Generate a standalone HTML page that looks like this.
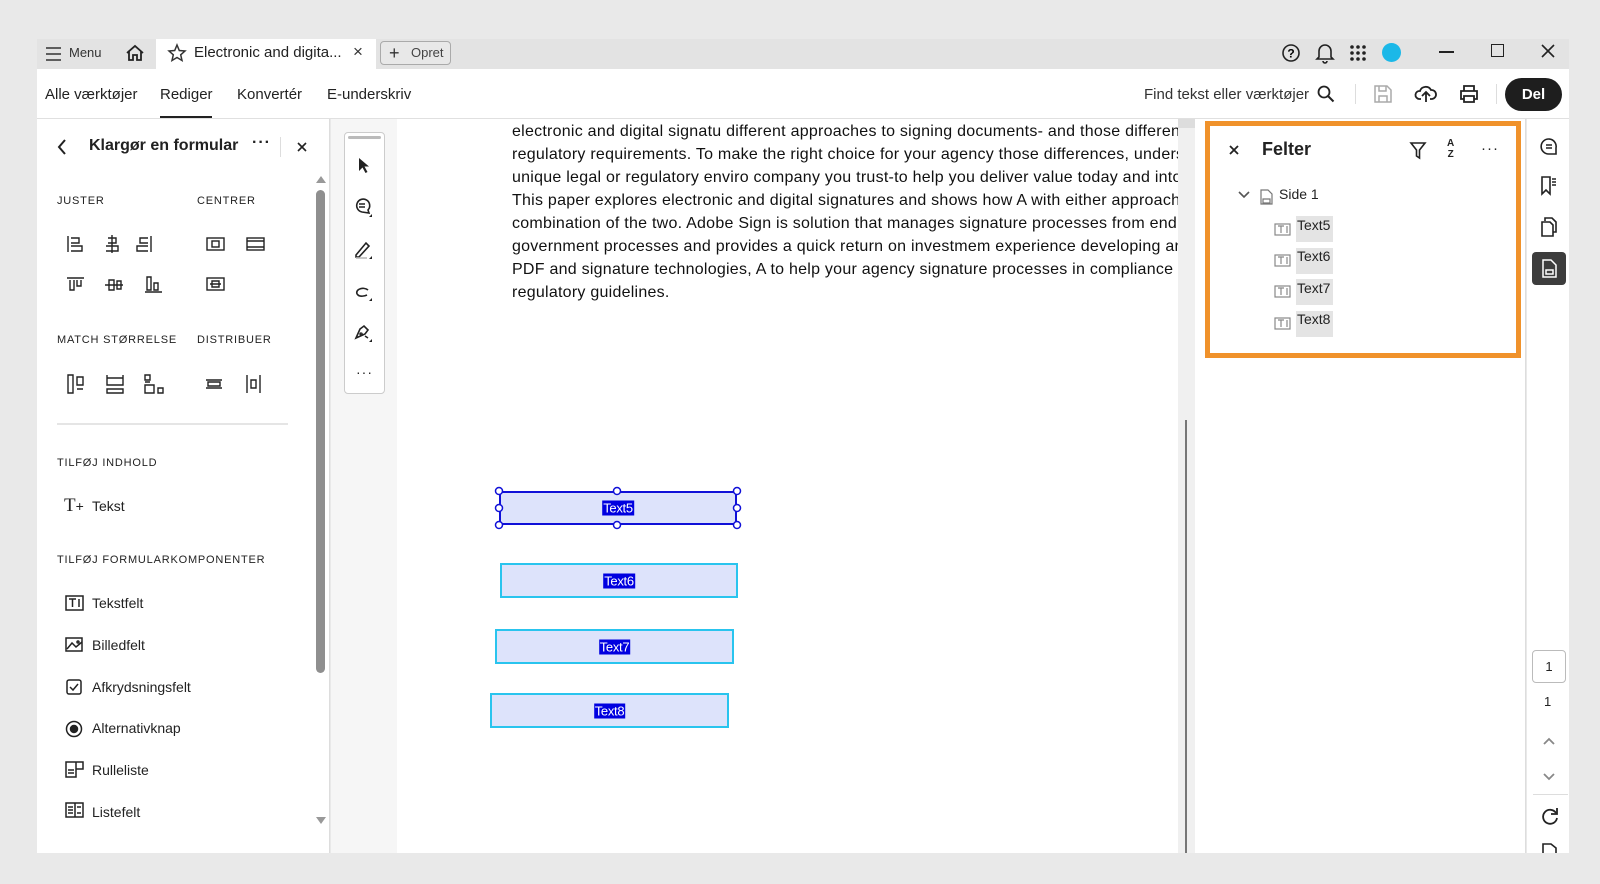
<!DOCTYPE html>
<html><head><meta charset="utf-8"><style>
*{margin:0;padding:0;box-sizing:border-box}
body{width:1600px;height:884px;background:#e9e9e9;font-family:"Liberation Sans",sans-serif;color:#222;position:relative;overflow:hidden}
.a{position:absolute}
.lbl{font-size:11px;letter-spacing:.8px;color:#222}
.item{font-size:14px;color:#222}
svg{position:absolute;overflow:visible}
.doc{font-size:16px;line-height:23px;color:#111;white-space:nowrap;letter-spacing:.25px}
.fld{position:absolute;background:#dde3fb;border:2px solid #29c4ee}
.fld span{position:absolute;left:50%;top:50%;transform:translate(-50%,-50%);background:#0000e0;color:#fff;font-size:13px;padding:0 1px;letter-spacing:-.3px}
.tr{font-size:14px;color:#222}
</style></head><body>
<div class="a" style="left:37px;top:39px;width:1532px;height:30px;background:#e3e3e3"></div>
<div class="a" style="left:156px;top:39px;width:220px;height:30px;background:#fff"></div>
<svg style="left:46px;top:47px" width="16" height="14"><path d="M0 1H15M0 7H15M0 13H15" stroke="#333" stroke-width="1.6"/></svg>
<div class="a" style="left:69px;top:45px;font-size:13px;color:#333">Menu</div>
<svg style="left:125px;top:44px" width="20" height="18"><path d="M2 9L10 2L18 9M4 7V16H8V11H12V16H16V7" fill="none" stroke="#222" stroke-width="1.8"/></svg>
<svg style="left:168px;top:44px" width="18" height="18"><path d="M9 1L11.3 6.5L17 7L12.7 10.8L14 16.5L9 13.5L4 16.5L5.3 10.8L1 7L6.7 6.5Z" fill="none" stroke="#333" stroke-width="1.5"/></svg>
<div class="a" style="left:194px;top:44px;font-size:15px;color:#222">Electronic and digita...</div>
<div class="a" style="left:353px;top:42px;font-size:17px;color:#333">×</div>
<div class="a" style="left:380px;top:41px;width:71px;height:24px;border:1.5px solid #aaa;border-radius:4px;background:#e8e8e8"></div>
<div class="a" style="left:389px;top:43px;font-size:18px;color:#333">+</div>
<div class="a" style="left:411px;top:45px;font-size:13px;color:#444">Opret</div>
<svg style="left:1281px;top:43px" width="20" height="20"><circle cx="10" cy="10" r="8" fill="none" stroke="#222" stroke-width="1.6"/><text x="10" y="14.5" font-size="12" font-weight="bold" text-anchor="middle" font-family="Liberation Sans">?</text></svg>
<svg style="left:1315px;top:42px" width="20" height="22"><path d="M4 15V9A6 6 0 0 1 16 9V15L18 17H2Z M8 19A2 2 0 0 0 12 19" fill="none" stroke="#222" stroke-width="1.6"/></svg>
<svg style="left:1350px;top:45px" width="16" height="16"><g fill="#222"><circle cx="2" cy="2" r="1.8"/><circle cx="8" cy="2" r="1.8"/><circle cx="14" cy="2" r="1.8"/><circle cx="2" cy="8" r="1.8"/><circle cx="8" cy="8" r="1.8"/><circle cx="14" cy="8" r="1.8"/><circle cx="2" cy="14" r="1.8"/><circle cx="8" cy="14" r="1.8"/><circle cx="14" cy="14" r="1.8"/></g></svg>
<div class="a" style="left:1382px;top:43px;width:19px;height:19px;border-radius:50%;background:#1bb8e8"></div>
<div class="a" style="left:1439px;top:51px;width:15px;height:2px;background:#222"></div>
<div class="a" style="left:1491px;top:44px;width:13px;height:13px;border:1.5px solid #222"></div>
<svg style="left:1541px;top:44px" width="14" height="14"><path d="M1 1L13 13M13 1L1 13" stroke="#222" stroke-width="1.6"/></svg>
<div class="a" style="left:37px;top:69px;width:1532px;height:50px;background:#fff;border-bottom:1px solid #e0e0e0"></div>
<div class="a" style="left:45px;top:86px;font-size:15px">Alle værktøjer</div>
<div class="a" style="left:160px;top:86px;font-size:15px">Rediger</div>
<div class="a" style="left:160px;top:116px;width:52px;height:2px;background:#222"></div>
<div class="a" style="left:237px;top:86px;font-size:15px">Konvertér</div>
<div class="a" style="left:327px;top:86px;font-size:15px">E-underskriv</div>
<div class="a" style="left:1144px;top:86px;font-size:15px;color:#333">Find tekst eller værktøjer</div>
<svg style="left:1317px;top:85px" width="18" height="18"><circle cx="7" cy="7" r="5.5" fill="none" stroke="#222" stroke-width="1.8"/><path d="M11 11L16.5 16.5" stroke="#222" stroke-width="2"/></svg>
<div class="a" style="left:1355px;top:84px;width:1px;height:20px;background:#ddd"></div>
<svg style="left:1374px;top:85px" width="18" height="18"><path d="M1 1H13L17 5V17H1Z M5 1V6H12V1 M5 17V11H13V17" fill="none" stroke="#aaa" stroke-width="1.5"/></svg>
<svg style="left:1415px;top:84px" width="22" height="20"><path d="M6 15H4A4 4 0 0 1 5 7A6 6 0 0 1 16 6A4.5 4.5 0 0 1 17 15H15 M11 18V9M7 12L11 8L15 12" fill="none" stroke="#222" stroke-width="1.8"/></svg>
<svg style="left:1459px;top:85px" width="20" height="18"><path d="M5 6V1H15V6 M5 14H2V6H18V14H15 M5 11H15V17H5Z" fill="none" stroke="#222" stroke-width="1.8"/></svg>
<div class="a" style="left:1496px;top:84px;width:1px;height:20px;background:#ddd"></div>
<div class="a" style="left:1505px;top:78px;width:57px;height:33px;border-radius:17px;background:#1e1e1e;color:#fff;font-weight:bold;font-size:15px;text-align:center;line-height:33px">Del</div>
<div class="a" style="left:37px;top:119px;width:293px;height:734px;background:#fff;border-right:1px solid #ddd"></div>
<svg style="left:57px;top:139px" width="10" height="16"><path d="M8 1L2 8L8 15" fill="none" stroke="#222" stroke-width="2"/></svg>
<div class="a" style="left:89px;top:137px;font-size:16px;font-weight:bold;color:#222">Klargør en formular</div>
<div class="a" style="left:252px;top:134px;font-size:16px;font-weight:bold;letter-spacing:1px">···</div>
<div class="a" style="left:280px;top:137px;width:1px;height:20px;background:#ddd"></div>
<svg style="left:297px;top:142px" width="10" height="10"><path d="M1 1L9 9M9 1L1 9" stroke="#222" stroke-width="1.6"/></svg>
<div class="a lbl" style="left:57px;top:195px">JUSTER</div>
<div class="a lbl" style="left:197px;top:195px">CENTRER</div>
<svg style="left:67px;top:235px" width="200" height="60" fill="none" stroke="#222" stroke-width="1.4">
<path d="M1 1V17M4 3H12V8H4M4 11H15V16H4"/>
<path d="M45 0V18M41 3H49V8H41M39 11H51V16H39"/>
<path d="M84 1V17M81 3H73V8H81M81 11H70V16H81"/>
<rect x="140" y="3" width="17" height="12"/><rect x="145" y="6" width="7" height="6"/>
<rect x="180" y="3" width="17" height="12"/><path d="M180 6H197M180 12H197"/>
<path d="M0 43H17M3 45V55H7V45M10 45V51H14V45"/>
<path d="M38 50H56M42 45H47V55H42ZM50 46H54V54H50Z"/>
<path d="M78 57H95M80 42V55H84V42ZM87 48V55H91V48Z"/>
<rect x="140" y="43" width="17" height="12"/><path d="M143 49H154M145 46H152V52H145Z"/>
</svg>
<div class="a lbl" style="left:57px;top:334px">MATCH STØRRELSE</div>
<div class="a lbl" style="left:197px;top:334px">DISTRIBUER</div>
<svg style="left:67px;top:374px" width="200" height="22" fill="none" stroke="#222" stroke-width="1.4">
<path d="M1 1H6V19H1ZM10 3H16V11H10ZM10 15H16"/>
<path d="M40 4H56V11H40ZM40 15H56V19H40ZM40 1V6M56 1V6"/>
<path d="M78 1H83V6H78ZM78 11H87V19H78ZM91 14H96V19H91ZM78 8H83"/>
<path d="M139 6H155M139 14H155M141 8H153V12H141Z"/>
<path d="M180 1V19M193 1V19M184 6H189V14H184Z"/>
</svg>
<div class="a" style="left:57px;top:423px;width:231px;height:2px;background:#e5e5e5"></div>
<div class="a lbl" style="left:57px;top:457px">TILFØJ INDHOLD</div>
<div class="a" style="left:64px;top:495px;font-size:19px;font-family:'Liberation Serif',serif">T<span style="font-size:14px;font-family:'Liberation Sans'">+</span></div>
<div class="a item" style="left:92px;top:498px">Tekst</div>
<div class="a lbl" style="left:57px;top:554px">TILFØJ FORMULARKOMPONENTER</div>
<svg style="left:65px;top:595px" width="20" height="240" fill="none" stroke="#222" stroke-width="1.5">
<rect x="1" y="1" width="17" height="14"/><path d="M4 4H11M7.5 4V12M14 4V12"/>
<rect x="1" y="43" width="16" height="13"/><path d="M2 54L7 48L11 52L17 47"/><circle cx="13" cy="47" r="1"/>
<rect x="2" y="85" width="14" height="14" rx="2"/><path d="M5 92L8 95L13 89"/>
<circle cx="9" cy="134" r="7.5"/><circle cx="9" cy="134" r="3.5" fill="#222"/>
<path d="M1 167H11V182H1ZM11 167H18V174H11M3 175H9M3 178H9"/>
<rect x="1" y="208" width="17" height="14"/><path d="M10 208V222M3 212H8M3 215H8M3 218H8M12 212H16M12 218H16"/>
</svg>
<div class="a item" style="left:92px;top:595px">Tekstfelt</div>
<div class="a item" style="left:92px;top:637px">Billedfelt</div>
<div class="a item" style="left:92px;top:679px">Afkrydsningsfelt</div>
<div class="a item" style="left:92px;top:720px">Alternativknap</div>
<div class="a item" style="left:92px;top:762px">Rulleliste</div>
<div class="a item" style="left:92px;top:804px">Listefelt</div>
<div class="a" style="left:316px;top:176px;width:0;height:0;border-left:5px solid transparent;border-right:5px solid transparent;border-bottom:7px solid #999"></div>
<div class="a" style="left:316px;top:190px;width:9px;height:483px;border-radius:5px;background:#8f8f8f"></div>
<div class="a" style="left:316px;top:817px;width:0;height:0;border-left:5px solid transparent;border-right:5px solid transparent;border-top:7px solid #999"></div>
<div class="a" style="left:331px;top:119px;width:66px;height:734px;background:#f6f6f6"></div>
<div class="a" style="left:344px;top:132px;width:41px;height:262px;border:1px solid #ccc;border-radius:4px;background:#fff"></div>
<div class="a" style="left:348px;top:136px;width:33px;height:3px;border-radius:2px;background:#bbb"></div>
<svg style="left:358px;top:157px" width="14" height="18"><path d="M1 1L1 14L4.5 10.5L7.5 16L9.5 15L6.5 9.5H11Z" fill="#222"/></svg>
<svg style="left:354px;top:198px" width="24" height="22" fill="none" stroke="#222" stroke-width="1.6"><path d="M8 14A6.5 6.5 0 1 1 14 12L15 15Z"/><path d="M5 6H11M5 9H11"/><path d="M18 16V19H15Z" fill="#222" stroke="none"/></svg>
<svg style="left:354px;top:240px" width="24" height="22" fill="none" stroke="#222" stroke-width="1.6"><path d="M2 15L12 3L15 6L5 17H2Z"/><path d="M2 18H13" stroke="#bbb"/><path d="M18 16V19H15Z" fill="#222" stroke="none"/></svg>
<svg style="left:354px;top:282px" width="24" height="22" fill="none" stroke="#222" stroke-width="1.6"><path d="M14 8A6 4 0 1 0 4 13C6 15 11 14 13 13"/><path d="M18 16V19H15Z" fill="#222" stroke="none"/></svg>
<svg style="left:354px;top:323px" width="24" height="22" fill="none" stroke="#222" stroke-width="1.6"><path d="M2 15L6 6L10 3L14 7L11 11L2 15ZM7 10A1 1 0 1 0 7.1 10"/><path d="M11 13L14 15"/><path d="M18 16V19H15Z" fill="#222" stroke="none"/></svg>
<div class="a" style="left:356px;top:364px;font-size:14px;letter-spacing:1px">···</div>
<div class="a" style="left:397px;top:119px;width:781px;height:734px;background:#fff"></div>
<div class="a doc" style="left:512px;top:120px;width:666px;overflow:hidden">electronic and digital signatu different approaches to signing documents- and those differences<br>regulatory requirements. To make the right choice for your agency those differences, understand<br>unique legal or regulatory enviro company you trust-to help you deliver value today and into the<br>This paper explores electronic and digital signatures and shows how A with either approach, or<br>combination of the two. Adobe Sign is solution that manages signature processes from end to end<br>government processes and provides a quick return on investmem experience developing and<br>PDF and signature technologies, A to help your agency signature processes in compliance with<br>regulatory guidelines.</div>
<div class="a" style="left:1178px;top:119px;width:17px;height:734px;background:#f0f0f0"></div>
<div class="a" style="left:1178px;top:119px;width:17px;height:9px;background:#ddd"></div>
<div class="a" style="left:1185px;top:420px;width:2px;height:433px;background:#777"></div>
<div class="a" style="left:1201px;top:510px;width:3px;height:45px;background:#aaa;border-radius:2px"></div>
<div class="fld" style="left:499px;top:491px;width:238px;height:34px;border-color:#1010d8"><span>Text5</span></div>
<svg style="left:499px;top:491px" width="240" height="36" fill="#fff" stroke="#1010d8" stroke-width="1.5"><circle cx="0" cy="0" r="3.5"/><circle cx="118" cy="0" r="3.5"/><circle cx="238" cy="0" r="3.5"/><circle cx="0" cy="17" r="3.5"/><circle cx="238" cy="17" r="3.5"/><circle cx="0" cy="34" r="3.5"/><circle cx="118" cy="34" r="3.5"/><circle cx="238" cy="34" r="3.5"/></svg>
<div class="fld" style="left:500px;top:563px;width:238px;height:35px"><span>Text6</span></div>
<div class="fld" style="left:495px;top:629px;width:239px;height:35px"><span>Text7</span></div>
<div class="fld" style="left:490px;top:693px;width:239px;height:35px"><span>Text8</span></div>
<div class="a" style="left:1195px;top:119px;width:331px;height:734px;background:#fff;border-right:1px solid #ddd"></div>
<div class="a" style="left:1205px;top:121px;width:316px;height:237px;border:5px solid #f0922b"></div>
<svg style="left:1229px;top:145px" width="10" height="10"><path d="M1 1L9 9M9 1L1 9" stroke="#222" stroke-width="1.8"/></svg>
<div class="a" style="left:1262px;top:139px;font-size:18px;font-weight:bold">Felter</div>
<svg style="left:1410px;top:142px" width="16" height="17"><path d="M1 1H15L9.5 8V16L6.5 14V8Z" fill="none" stroke="#222" stroke-width="1.6"/></svg>
<div class="a" style="left:1447px;top:138px;font-size:10px;font-weight:bold;line-height:11px;text-align:center">A<br>Z</div>
<div class="a" style="left:1481px;top:140px;font-size:15px;letter-spacing:1px">···</div>
<svg style="left:1238px;top:191px" width="12" height="8"><path d="M1 1L6 6L11 1" fill="none" stroke="#555" stroke-width="1.6"/></svg>
<svg style="left:1260px;top:189px" width="13" height="16"><path d="M1 1H8L12 5V15H1Z M3 10H10V14H3Z" fill="none" stroke="#777" stroke-width="1.2"/></svg>
<div class="a tr" style="left:1279px;top:186px">Side 1</div>
<div class="a" style="left:1296px;top:216px;width:37px;height:26px;background:#e4e4e4"></div>
<div class="a" style="left:1296px;top:248px;width:37px;height:26px;background:#e4e4e4"></div>
<div class="a" style="left:1296px;top:279px;width:37px;height:26px;background:#e4e4e4"></div>
<div class="a" style="left:1296px;top:311px;width:37px;height:26px;background:#e4e4e4"></div>
<svg style="left:1274px;top:223px" width="18" height="110" fill="none" stroke="#888" stroke-width="1.2"><g id="ti"><rect x="1" y="1" width="15" height="11"/><path d="M4 3H10M7 3V10M13 3V10"/></g><use href="#ti" y="31"/><use href="#ti" y="62"/><use href="#ti" y="94"/></svg>
<div class="a tr" style="left:1297px;top:217px">Text5</div>
<div class="a tr" style="left:1297px;top:248px">Text6</div>
<div class="a tr" style="left:1297px;top:280px">Text7</div>
<div class="a tr" style="left:1297px;top:311px">Text8</div>
<div class="a" style="left:1527px;top:119px;width:42px;height:734px;background:#fff"></div>
<svg style="left:1539px;top:137px" width="20" height="20" fill="none" stroke="#222" stroke-width="1.6"><path d="M10 17A7.5 7.5 0 1 1 17 11V17Z"/><path d="M7 8H13M7 11H13"/></svg>
<svg style="left:1540px;top:176px" width="20" height="20" fill="none" stroke="#222" stroke-width="1.6"><path d="M2 1H10V18L6 14L2 18Z"/><path d="M12 3H16M12 6H16M12 9H16"/></svg>
<svg style="left:1541px;top:217px" width="18" height="20" fill="none" stroke="#222" stroke-width="1.6"><path d="M4 4V1H11L15 5V15H12"/><path d="M1 5H9L12 8V19H1Z"/></svg>
<div class="a" style="left:1532px;top:252px;width:34px;height:33px;border-radius:4px;background:#3d3d3d"></div>
<svg style="left:1542px;top:259px" width="15" height="19" fill="none" stroke="#fff" stroke-width="1.5"><path d="M1 1H9L14 6V18H1Z M4 11H11V15H4Z"/></svg>
<div class="a" style="left:1532px;top:650px;width:34px;height:33px;border:1px solid #bbb;border-radius:4px;text-align:center;line-height:31px;font-size:13px">1</div>
<div class="a" style="left:1544px;top:694px;font-size:13px">1</div>
<svg style="left:1543px;top:737px" width="12" height="8"><path d="M1 7L6 2L11 7" fill="none" stroke="#888" stroke-width="1.8"/></svg>
<svg style="left:1543px;top:773px" width="12" height="8"><path d="M1 1L6 6L11 1" fill="none" stroke="#888" stroke-width="1.8"/></svg>
<div class="a" style="left:1533px;top:794px;width:35px;height:1px;background:#ddd"></div>
<svg style="left:1541px;top:807px" width="18" height="18" fill="none" stroke="#222" stroke-width="1.8"><path d="M15 6A7 7 0 1 0 16 11"/><path d="M16 1V7H10" /></svg>
<svg style="left:1542px;top:843px" width="16" height="10" fill="none" stroke="#222" stroke-width="1.6"><path d="M1 10V1H9L14 5V10"/></svg>
<div class="a" style="left:0;top:853px;width:1600px;height:31px;background:#e9e9e9"></div>
</body></html>
